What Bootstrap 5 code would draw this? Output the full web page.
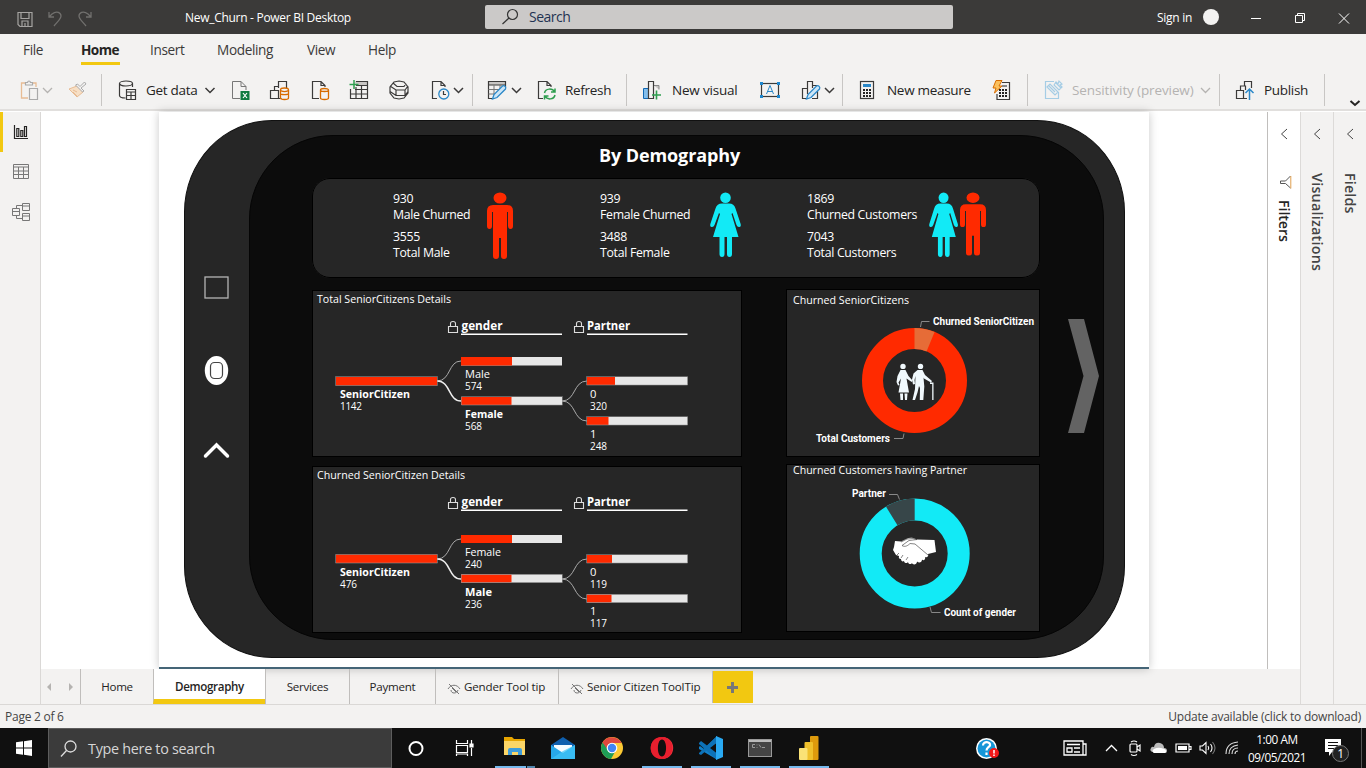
<!DOCTYPE html>
<html lang="en">
<head>
<meta charset="utf-8">
<meta name="viewport" content="width=device-width, initial-scale=1">
<title>New_Churn - Power BI Desktop</title>
<link href="https://cdn.jsdelivr.net/npm/bootstrap@5.3.0/dist/css/bootstrap.min.css" rel="stylesheet">
<style>
body{font-family:"Open Sans","Noto Sans",sans-serif;font-size:13px;line-height:16px;color:#252423;width:1366px;height:768px;overflow:hidden;background:#f3f2f1}
svg{display:block;flex:none;overflow:visible}
.ln{fill:none;stroke:#3b3a39;stroke-width:1.2}
.title-bar{height:34px;background:#3b3a39;color:#fff;padding-left:17px;font-size:12px;letter-spacing:-.29px}
.title-bar .doc-name{margin-left:92px;width:300px;padding-top:2px}
.search-box{width:468px;height:24px;background:#cbc9c8;border-radius:2px;color:#1f3352;font-size:14px;letter-spacing:-.5px;padding-left:17px}
.menu-tabs{height:38px;padding:6px 0 0 23px;font-size:13.6px;letter-spacing:-.35px;line-height:20px;color:#3b3a39}
.menu-tabs span{white-space:nowrap;height:25px}
.menu-tabs .current{font-weight:700;color:#252423;border-bottom:3px solid #f2c811;letter-spacing:-.55px;width:39px}
.ribbon{height:39px;padding-left:20px;grid-template-columns:22px 26px 33px 17px 28px 58px 27px 38px 42px 37px 41px 42px 21px 20px 15px 23px 27px 28px 61px 16px 30px 87px 42px 22px 19px 17px 28px 105px 35px 17px 28px 128px 19px 16px 29px 60px 25px 17px;border-bottom:2px solid #e1dfdd;font-size:13.5px;letter-spacing:-.3px;white-space:nowrap;padding-bottom:1px}
.bar-sep{width:1px;height:32px;background:#c8c6c4}
.workspace{height:593px;border-top:1px solid #fff}
.rail{width:41px;border-right:1px solid #dad8d6}
.rail-btn{height:40px;padding-left:12px}
.rail-btn.on{border-left:3px solid #f2c811;padding-left:9px}
.stage{width:1226px;height:557px;background:#fff;padding-left:118px}
.report-page{width:990px;height:557px;background:#fff;border-bottom:2px solid #456577;box-shadow:0 0 9px rgba(0,0,0,.22);padding:8px 0 0 25px}
.phone{width:941px;height:538px;background:#262626;border-radius:88px/92px;border:1px solid #111;padding:14px 0 0 64px}
.phone-keys{width:64px;margin-left:-65px;margin-right:1px;padding-top:141px}
.screen{width:855px;height:505px;background:#0c0c0c;border:1px solid #050505;border-radius:84px;color:#fff;padding:7px 0 0 62px}
.screen h1{font-size:18px;font-weight:700;letter-spacing:-.1px;line-height:24px;width:730px;padding-left:287px;margin:0 0 11px}
.panel{background:#262626;outline:1px solid #000;outline-offset:-1px}
.summary{width:728px;height:100px;border-radius:18px;padding:13px 0 0 81px;font-size:12.3px;letter-spacing:-.3px}
.summary .fact{width:93px;white-space:nowrap}
.summary .fact div+div{margin-top:6px}
.summary .fact.wide{width:122px}
.boards{grid-template-columns:430px 254px 31px;column-gap:44px;margin-top:12px}
.boards svg text{fill:#fff}
.next{margin-left:-16px;margin-top:29px}
.hd{font-weight:700;font-size:12px}
.nm{font-size:11.2px}.vl{font-size:10px}.ttl{font-size:11.5px}
.dl{font-family:Roboto,sans-serif;font-weight:700;font-size:10px}
.pane{width:33px;border-left:1px solid #dcdad8;padding-top:16px;color:#444}
.pane .upright{writing-mode:vertical-rl;font-weight:600;font-size:14.3px;letter-spacing:-.1px;line-height:18px}
.filters-pane{background:#fff;height:557px;border-color:#c0bebc}
.sheets{width:1259px;height:35px;font-size:11.6px;letter-spacing:-.28px;white-space:nowrap}
.sheets>div{border-left:1px solid #c0bebc;height:35px;padding-top:1px}
.sheets .open-sheet{background:#fff;font-weight:600;border-bottom:5px solid #f2c811;padding-top:5px;letter-spacing:-.35px}
.sheets .add{background:#f2c811;width:41px;height:32px;margin-top:2px;padding:0 1px 0 0}
.status{height:24px;border-top:1px solid #dad8d6;padding:0 5px;font-size:12px;letter-spacing:-.25px;color:#444}
.taskbar{height:40px;background:#101010;color:#fff}
.task-search{width:344px;height:40px;background:#3b3b3b;border:1px solid #5d5d5d;color:#d6d6d6;font-size:14.4px;letter-spacing:-.3px;padding:1px 0 0 11px}
.task{width:49px;height:40px;padding-right:1px}
.app{width:49px;height:40px;padding-top:8px}
.clock{width:60px;font-size:11.8px;line-height:18px;letter-spacing:-.45px;text-align:center}
</style>
</head>
<body>
<header class="title-bar d-flex align-items-center">
  <svg width="76" height="20" fill="none" stroke="#a6a4a2" stroke-width="1.2"><path d="M1 5.500h14v14h-12l-2-2zM4 5.500v6h8v-6M5 19v-5h6v5M8 16v3"/><g stroke="#71706e" stroke-width="1.300"><path d="M32 5v5h5M32 10l3-3c5-4 9-1 9 2 0 3-3 5-7 10"/><path d="M74 5v5h-5M74 10l-3-3c-5-4-9-1-9 2 0 3 3 5 7 10"/></g></svg>
  <span class="doc-name">New_Churn - Power BI Desktop</span>
  <div class="search-box d-flex align-items-center gap-2"><svg width="19" height="16" class="ln" style="stroke:#333"><circle cx="10.500" cy="5.500" r="5"/><path d="M7 9l-6.500 6"/></svg><span>Search</span></div>
  <span style="width:46px;margin-left:204px;padding-top:1px">Sign in</span>
  <svg width="163" height="34"><circle cx="8" cy="17" r="8" fill="#f3f2f1"/><g fill="none" stroke="#fff" stroke-width="1"><path d="M48 18.500h10M92.500 15.500h7v7h-7zM94.500 15v-1.500h7v7h-2M136 13.500l10 10M146 13.500l-10 10"/></g></svg>
</header>
<nav class="menu-tabs d-flex">
  <span style="width:58px">File</span><span class="current">Home</span><span style="width:67px;margin-left:30px">Insert</span><span style="width:90px">Modeling</span><span style="width:61px">View</span><span>Help</span>
</nav>
<section class="ribbon d-grid align-items-center">
  <svg width="20" height="20"><path d="M6 3H1.500v15H8M12 3h4v4" fill="none" stroke="#e8bc94" stroke-width="1.300"/><path d="M5.500 5V2.500h2C8 .5 10 .5 10.500 2.500h2V5zM9.500 8.500h8v11h-8z" fill="none" stroke="#aaa" stroke-width="1.200"/></svg>
  <svg width="11" height="8" fill="none" stroke="#b5b3b1" stroke-width="1.300"><path d="M1 2l4.500 4.500L10 2"/></svg>
  <svg width="20" height="20" fill="none"><path d="M1 9l8-3 6 6-6 5z" fill="#f7dfc5" stroke="#e8bc94"/><path d="M7.500 5l7 7 1.500-1-3-3 5-4-1.500-2L12 6.500 9.500 4z" stroke="#aaa" fill="#f3f2f1"/><path d="M5 10l4 2M5 12l4 4" stroke="#e8bc94"/></svg>
  <div class="bar-sep"></div>
  <svg width="20" height="20" class="ln"><ellipse cx="8" cy="3.500" rx="6.500" ry="2.500"/><path d="M1.500 3.500v12c0 1.500 3 2.500 6 2.500M14.500 3.500V7M8.500 9.500h9v10h-9zM8.500 12h9M8.500 15.500h9M13 12v7"/></svg>
  <span>Get data</span>
  <svg width="11" height="8" class="ln" style="stroke-width:1.5"><path d="M1.500 2L6 6.500 10.500 2"/></svg>
  <svg width="20" height="20"><path d="M9 18.500H1.500v-17H10l5 5V10M10 1.500v5h5" fill="none" stroke="#777"/><rect x="9.500" y="11" width="9" height="9" fill="#107c41"/><path d="M12 13l4 5M16 13l-4 5" stroke="#fff" stroke-width="1.200"/></svg>
  <svg width="21" height="20" fill="none"><path class="ln" d="M1.500 10.500h8v8h-8zM5.500 10V6.500H10M9.500 8V1.500h8V8M9.500 18.500h3"/><path d="M11.500 10v8c0 2 8 2 8 0v-8M11.500 13.500c0 1.500 8 1.500 8 0" stroke="#d86c00" stroke-width="1.300"/><ellipse cx="15.500" cy="9.800" rx="4" ry="1.800" stroke="#d86c00" stroke-width="1.300"/></svg>
  <svg width="20" height="20" fill="none"><path class="ln" d="M8 18.500H1.500v-17H10l4 4V7M10 1.500v4h4"/><path d="M9.500 10v8c0 2 8 2 8 0v-8M9.500 10c0 2 8 2 8 0 0-2-8-2-8 0z" stroke="#d86c00" stroke-width="1.300"/></svg>
  <svg width="21" height="20" fill="none"><path d="M7 1.500h12v4H8" fill="#c8c6c4"/><path class="ln" d="M8 1.500h11.500v17h-17V9M8 5.500h11.500M7 9.500h12.500M2.500 14h17M8 7v11.500M13.500 5.500v13"/><path d="M6 0v9M1.500 4.500h9" stroke="#2f9e4f" stroke-width="1.500"/></svg>
  <svg width="20" height="20" class="ln"><path d="M10 1l5 1 4 5v6l-4 5-5 1-5-1-4-5V7l4-5zM1 6l6 4h9l3-4M1 11.500l6 4h9l3-4M4 3l4 3.500h7l2-3M7 10v6M16 10v6"/></svg>
  <svg width="20" height="20" fill="none"><path class="ln" d="M6 18.500H1.500v-17H10l4 4V7M10 1.500v4h4"/><circle cx="12.800" cy="14" r="5" stroke="#2b88c8" stroke-width="1.300"/><path class="ln" d="M12.500 11v3.500H15"/></svg>
  <svg width="11" height="8" class="ln" style="stroke-width:1.5"><path d="M2 2l4.500 4.500L11 2"/></svg>
  <div class="bar-sep"></div>
  <svg width="20" height="20" fill="none"><path d="M1.500 1.500h17v3.500h-17z" fill="#c8c6c4"/><path class="ln" d="M18.500 7V1.500h-17v17H6M1.500 5h17"/><path stroke="#777" d="M1.500 9.500H13M1.500 14H8M7 5v10M13 5v5"/><path d="M5.500 19l1.500-4.500 8.500-8.500c2-1 4 1 3 3L10 17.500z" fill="#cde6f7" stroke="#2b88c8" stroke-width="1.300"/></svg>
  <svg width="11" height="8" class="ln" style="stroke-width:1.5"><path d="M2 2l4.500 4.500L11 2"/></svg>
  <svg width="20" height="20" fill="none"><path class="ln" d="M6 18.500H1.500v-17H10l4 4V7M10 1.500v4h4"/><path d="M7.500 13c1-5 8-5 10-1M18 8.500V12h-4M18 15c-1 5-8 5-10 1M7.500 19.500V16h4" stroke="#2f9e4f" stroke-width="1.500"/></svg>
  <span>Refresh</span>
  <div class="bar-sep"></div>
  <svg width="20" height="20" fill="none"><path d="M1.500 8.500h5v10h-5z" fill="#83beec" stroke="#1068b5"/><path d="M12 5.500h5v4" stroke="#888" fill="#c8c6c4"/><path class="ln" fill="none" d="M6.500 1.500h5v17h-5z"/><path d="M14.500 10.500v9M10 15h9" stroke="#2f9e4f" stroke-width="1.600"/></svg>
  <span style="letter-spacing:-.2px">New visual</span>
  <svg width="22" height="20"><rect x="2.500" y="3.500" width="17" height="13" class="ln"/><g fill="#1e88d0"><rect x="1" y="2" width="3" height="3"/><rect x="18" y="2" width="3" height="3"/><rect x="1" y="15" width="3" height="3"/><rect x="18" y="15" width="3" height="3"/></g><path d="M7.500 14L11 5.500l3.500 8.500M8.500 11.500h5" fill="none" stroke="#2b88c8"/></svg>
  <svg width="20" height="20" fill="none"><path class="ln" d="M6.500 8.500h-5v10H5M6.500 14V1.500h5V8M12 5.500h4.500M16.500 11v7.500H11"/><path d="M5.500 19l1.500-4.500 8.500-8.500c2-1 4 1 3 3L10 17.500z" fill="#cde6f7" stroke="#2b88c8" stroke-width="1.300"/></svg>
  <svg width="11" height="8" class="ln" style="stroke-width:1.5"><path d="M2 2l4.500 4.500L11 2"/></svg>
  <div class="bar-sep"></div>
  <svg width="20" height="20"><rect x="1.500" y="1.500" width="13" height="17" class="ln"/><rect x="4" y="4" width="8" height="3" fill="#2b88c8"/><path d="M4 10h8M4 13h8M4 16h8" stroke="#252423" stroke-width="2" stroke-dasharray="2 1"/></svg>
  <span>New measure</span>
  <svg width="20" height="20"><path d="M10 2.500h7.500v17H5V14" class="ln"/><path d="M10 6h5" stroke="#888" stroke-width="2"/><path d="M7 10h8M7 13h8M7 16h8" stroke="#252423" stroke-width="2" stroke-dasharray="2 1"/><path d="M4 .500h6L7 6h3l-7.500 7L4 8H1z" fill="#fbc15e" stroke="#d86c00"/></svg>
  <div class="bar-sep"></div>
  <svg width="20" height="20" fill="none" stroke="#a5cde5" stroke-width="1.200"><path d="M10 1.500H1.500v17h13V12"/><path d="M3 7l3-3 8 8-3 3-8-8zM5 6l6 6M12 3l5 5M10 5l2-3 2 2 1-3 3 3-2 1 2 2-3 3z"/></svg>
  <span style="color:#b5b3b1;letter-spacing:-.12px">Sensitivity (preview)</span>
  <svg width="11" height="8" fill="none" stroke="#b5b3b1" stroke-width="1.300"><path d="M1 2l4.500 4.500L10 2"/></svg>
  <div class="bar-sep"></div>
  <svg width="20" height="20" fill="none"><path class="ln" d="M1.500 10.500h7v8h-7zM5.500 10V6h5v4M9.500 6V1.500h7V8M8.500 18.500H12"/><path d="M14.500 20V9M10.500 13l4-4 4 4" stroke="#2b88c8" stroke-width="1.500"/></svg>
  <span>Publish</span>
  <div class="bar-sep"></div>
  <svg width="12" height="8" fill="none" stroke="#252423" stroke-width="2" style="margin-top:26px"><path d="M1.500 2L6 6l4.500-4"/></svg>
</section>

<main class="workspace d-flex">
  <aside class="rail">
    <div class="rail-btn on d-flex align-items-center"><svg width="18" height="16" fill="none" stroke="#252423" stroke-width="1.200"><path d="M2.500 1v13.500H16M4.800 4.500h2v8h-2zM8.800 6.500h2v6h-2zM12.500 2.500h2v10h-2z"/></svg></div>
    <div class="rail-btn d-flex align-items-center"><svg width="18" height="16" fill="none" stroke="#777"><path d="M1.500 .5h15v14h-15zM1.500 3h15M1.500 7h15M1.500 10.500h15M6.500 3v11M11.500 3v11"/></svg></div>
    <div class="rail-btn d-flex align-items-center"><svg width="18" height="19" fill="none" stroke="#777"><path d="M.5 5.500h7v7h-7zM.5 8.500h7M10.500 .5h7v7h-7zM10.500 3h7M10.500 10.500h7v7h-7zM10.500 13h7M4.500 5.500v-3h6M4.500 12.500v3h6"/></svg></div>
  </aside>
  <div class="d-flex flex-column">
   <div class="d-flex">
    <div class="stage">
      <article class="report-page">
        <div class="phone d-flex">
          <div class="phone-keys"><svg width="64" height="190" fill="none"><rect x="21" y="1" width="23" height="21" stroke="#b4b4b4" stroke-width="1.300"/><ellipse cx="32.500" cy="94.500" rx="11.700" ry="14.500" fill="#fff"/><rect x="26.500" y="86.500" width="12" height="16" rx="4" stroke="#444" stroke-width="1.200"/><path d="M21.500 180l11-11 11 11" stroke="#fff" stroke-width="3.500" stroke-linecap="round"/></svg></div>
          <div class="screen">
            <h1>By Demography</h1>
            <div class="panel summary d-flex">
              <div class="fact"><div>930<br>Male Churned</div><div>3555<br>Total Male</div></div>
              <svg width="114" height="70" fill="#ff2a00"><g id="male"><ellipse cx="14" cy="7" rx="6.500" ry="5.500"/><path d="M7 14h14q6 0 6 6v15q0 3-2.500 3t-2.500-3V21h-1v44q0 3-3 3t-3-3V47h-2v18q0 3-3 3t-3-3V21H6v14q0 3-2.500 3T1 35V20q0-6 6-6z"/></g></svg>
              <div class="fact" style="width:110px"><div>939<br>Female Churned</div><div>3488<br>Total Female</div></div>
              <svg width="97" height="70" fill="#12eaf6"><g id="female"><circle cx="15.500" cy="6.800" r="5.300"/><path d="M12 12.500h7q5 0 6.500 5l5 15q1 3-1 3.500t-3-2L22.500 22l-1 1 7 23h-6.500v17q0 3-2.500 3T17 63V46h-2.500v17q0 3-2.500 3t-2.500-3V46H3l7-23-1-1-4.500 12q-1 2.500-3 2T.5 32.500l5-15q1.500-5 6.500-5z"/></g></svg>
              <div class="fact wide"><div>1869<br>Churned Customers</div><div>7043<br>Total Customers</div></div>
              <svg width="60" height="70"><use href="#female" transform="scale(.94 1)" fill="#12eaf6"/><use href="#male" fill="#ff2a00" transform="translate(30 0) scale(1 .95)"/></svg>
            </div>
            <div class="boards d-grid">
              <div class="d-flex flex-column" style="gap:9px">
                <div class="panel"><svg width="430" height="167" viewBox="312 290 430 167">
                  <text class="ttl" x="317" y="303" textLength="134" lengthAdjust="spacingAndGlyphs">Total SeniorCitizens Details</text>
                  <g fill="none" stroke="#ddd" stroke-width="1.100"><path d="M448.500 326.500h9v6h-9zM450.500 326v-2.500q0-2 2.500-2t2.500 2v2.500M574.500 326.500h9v6h-9zM576.500 326v-2.500q0-2 2.500-2t2.500 2v2.500"/></g>
                  <text class="hd" x="461.500" y="330" textLength="41" lengthAdjust="spacingAndGlyphs">gender</text><text class="hd" x="587" y="330" textLength="43" lengthAdjust="spacingAndGlyphs">Partner</text>
                  <path d="M461 334.200h101M587 334.200h100.500" stroke="#fff" stroke-width="1.500"/>
                  <g fill="none" stroke="#aaa"><path d="M437 381c14 0 11-20 24-20M562 401c14 0 11-20 25-20M562 401c14 0 11 20 25 20"/><path d="M437 381c14 0 11 20 24 20" stroke="#eee" stroke-width="1.500"/></g>
                  <path d="M461 357h101v8.500H461zM461 397h101v8H461zM587 377h100.500v8H587zM587 417h100.500v8H587z" fill="#e6e6e6"/>
                  <path d="M336 377h101v8.500H336zM461 357h51v8.500h-51zM461 397h50.500v8H461zM587 377h28v8h-28zM587 417h21.500v8H587z" fill="#ff2a00"/>
                  <path d="M335.500 376.500h102v9h-102zM461.500 396.500h101v8.500h-101zM586.500 376.500h101v8.500h-101zM586.500 416.500h101v8.500h-101z" fill="none" stroke="#999" stroke-opacity=".55"/>
                  <g class="nm"><text x="465" y="378" textLength="25" lengthAdjust="spacingAndGlyphs">Male</text><text x="590" y="398">0</text><text x="590" y="437.500">1</text><g font-weight="700"><text x="340" y="398" textLength="70" lengthAdjust="spacingAndGlyphs">SeniorCitizen</text><text x="465" y="418" textLength="38" lengthAdjust="spacingAndGlyphs">Female</text></g></g>
                  <g class="vl"><text x="465" y="390" textLength="17">574</text><text x="340" y="410" textLength="22">1142</text><text x="465" y="429.500" textLength="17">568</text><text x="590" y="410" textLength="17">320</text><text x="590" y="449.500" textLength="17">248</text></g>
                </svg></div>
                <div class="panel"><svg width="430" height="167" viewBox="312 466 430 167">
                  <text class="ttl" x="317" y="479" textLength="148" lengthAdjust="spacingAndGlyphs">Churned SeniorCitizen Details</text>
                  <g fill="none" stroke="#ddd" stroke-width="1.100"><path d="M448.500 502.500h9v6h-9zM450.500 502v-2.500q0-2 2.500-2t2.500 2v2.500M574.500 502.500h9v6h-9zM576.500 502v-2.500q0-2 2.500-2t2.500 2v2.500"/></g>
                  <text class="hd" x="461.500" y="506" textLength="41" lengthAdjust="spacingAndGlyphs">gender</text><text class="hd" x="587" y="506" textLength="43" lengthAdjust="spacingAndGlyphs">Partner</text>
                  <path d="M461 510.200h101M587 510.200h100.500" stroke="#fff" stroke-width="1.500"/>
                  <g fill="none" stroke="#aaa"><path d="M437 559c14 0 11-20 24-20M562 579c14 0 11-20 25-20M562 579c14 0 11 20 25 20"/><path d="M437 559c14 0 11 20 24 20" stroke="#eee" stroke-width="1.500"/></g>
                  <path d="M461 535h101v8H461zM461 574.500h101v8H461zM587 555h100.500v8H587zM587 594.500h100.500v8H587z" fill="#e6e6e6"/>
                  <path d="M336 554.500h101v8.500H336zM461 535h51v8h-51zM461 574.500h50.500v8H461zM587 555h25v8h-25zM587 594.500h24.500v8H587z" fill="#ff2a00"/>
                  <path d="M335.500 554.500h102v8.500h-102zM461.500 574.500h101v8h-101zM586.500 554.500h101v8.500h-101zM586.500 594.500h101v8h-101z" fill="none" stroke="#999" stroke-opacity=".55"/>
                  <g class="nm"><text x="465" y="556" textLength="36" lengthAdjust="spacingAndGlyphs">Female</text><text x="590" y="576">0</text><text x="590" y="615">1</text><g font-weight="700"><text x="340" y="576" textLength="70" lengthAdjust="spacingAndGlyphs">SeniorCitizen</text><text x="465" y="596" textLength="27" lengthAdjust="spacingAndGlyphs">Male</text></g></g>
                  <g class="vl"><text x="465" y="568" textLength="17">240</text><text x="340" y="588" textLength="17">476</text><text x="465" y="607.500" textLength="17">236</text><text x="590" y="588" textLength="17">119</text><text x="590" y="627" textLength="17">117</text></g>
                </svg></div>
              </div>
              <div class="d-flex flex-column" style="gap:7px;margin-top:-1px">
                <div class="panel"><svg width="254" height="168" viewBox="786 289 254 168">
                  <text class="ttl" x="793" y="304" textLength="116" lengthAdjust="spacingAndGlyphs">Churned SeniorCitizens</text>
                  <g fill="none" stroke-width="21" transform="rotate(-90 914.500 380.500)"><circle cx="914.500" cy="380.500" r="42" stroke="#ff2a00"/><circle cx="914.500" cy="380.500" r="42" stroke="#e66c37" pathLength="360" stroke-dasharray="22.500 337.500"/></g>
                  <path d="M920.500 327l1-5.500h8M894 438.500h9l1-5" fill="none" stroke="#888"/>
                  <text class="dl" x="933" y="325" textLength="101" lengthAdjust="spacingAndGlyphs">Churned SeniorCitizen</text><text class="dl" x="816" y="442" textLength="74" lengthAdjust="spacingAndGlyphs">Total Customers</text>
                  <g fill="#f1f9fd"><circle cx="903" cy="366.400" r="2.700"/><path d="M900.500 370h5l3 6 4 4.500-.8 1.500-5.200-3.500 2.500 14h-10.500l2.500-14-2.500 4 1 2.500-1.500.5-1.500-3.500 1-6zM900 393.500h3v6.500h-2.500zM904.500 393.500h3l-.5 6.500H905z"/><circle cx="920.500" cy="366.400" r="2.700"/><path d="M917.500 370h5l2.500 5 7 6-1 1.500-7-4-.5-1 .8 9-1 13.500h-3.500l.2-12-1-2-1.500 6.500-2.500 7.500h-2.500l2.500-11 .5-13-1 4 .5 4-2 .5-1-5 1.500-6zM930 382.500h3.500v17.500h-1.300v-16H930z"/></g>
                </svg></div>
                <div class="panel"><svg width="254" height="168" viewBox="786 464 254 168">
                  <text class="ttl" x="793" y="474" textLength="174" lengthAdjust="spacingAndGlyphs">Churned Customers having Partner</text>
                  <g fill="none" stroke-width="22"><circle cx="914.700" cy="553.500" r="44" stroke="#12eaf6"/><circle cx="914.700" cy="553.500" r="44" stroke="#374649" pathLength="360" stroke-dasharray="31.500 328.500" transform="rotate(-121.500 914.700 553.500)"/></g>
                  <path d="M889 494.500h8.500l2 5M930 607l1.500 5.500h9" fill="none" stroke="#888"/>
                  <text class="dl" x="852" y="497" textLength="34" lengthAdjust="spacingAndGlyphs">Partner</text><text class="dl" x="944" y="616" textLength="72" lengthAdjust="spacingAndGlyphs">Count of gender</text>
                  <path d="M895 541l6 .5c4-2 8-4.500 12-3.500l4 1.500 17.500.5 1.500 12-8 2c1 2-1 4-3 3 1 3-2 4-3 2.500 0 3-3 4-5 2 0 3-4 4-5 1.500-1 2-4 1-4-1-1 2-4 1-4-1-1.500 1-3 0-3-2-2 0-2.500-1-2-3l-3-1-3-5 1-3z" fill="#fff"/><path d="M901 542l6-3 6-.5 4 1M917 539.500l-8 1-7 5c3 2 6 0 8-2l5 .5 13 11M897 555l2-2M901 558l2-3M906 560l2-3" fill="none" stroke="#333" stroke-width=".6"/>
                </svg></div>
              </div>
              <svg class="next" width="31" height="114"><path d="M0 0h16l15 57-15 57H0l15.500-57z" fill="#636363"/></svg>
            </div>
          </div>
        </div>
      </article>
    </div>
    <aside class="pane filters-pane d-flex flex-column align-items-center"><svg width="8" height="12" fill="none" stroke="#444"><path d="M7 1L1.500 6 7 11"/></svg><svg style="margin-top:36px;margin-left:4px" width="12" height="12" fill="none" stroke="#555"><path d="M10.500 0L5.500 5H.5v2.500h5l5 4.500"/><path d="M10.800 0v12.500" stroke="#e0a050"/></svg><span class="upright" style="margin-top:12px;color:#252423">Filters</span></aside>
   </div>
   <div class="sheets d-flex">
     <div class="border-0 d-flex align-items-center" style="width:39px;padding-left:5px"><svg width="30" height="10" fill="#b5b3b1"><path d="M5 1v8L1 5zM23 1v8l4-4z"/></svg></div>
     <div class="d-flex align-items-center justify-content-center" style="width:73px">Home</div>
     <div class="open-sheet d-flex align-items-center justify-content-center" style="width:112px">Demography</div>
     <div class="d-flex align-items-center justify-content-center" style="width:84px">Services</div>
     <div class="d-flex align-items-center justify-content-center" style="width:86px">Payment</div>
     <div class="d-flex align-items-center gap-1" style="width:123px;padding-left:12px;letter-spacing:-.18px"><svg width="12" height="10" fill="none" stroke="#777" class="mt-1"><path d="M0 5c3-5 9-5 12 0M3 6c0 4 6 4 7 0M1 0l10 10M4 4l4 4"/></svg>Gender Tool tip</div>
     <div class="d-flex align-items-center gap-1" style="width:154px;padding-left:12px;letter-spacing:-.15px"><svg width="12" height="10" fill="none" stroke="#777" class="mt-1"><path d="M0 5c3-5 9-5 12 0M3 6c0 4 6 4 7 0M1 0l10 10M4 4l4 4"/></svg>Senior Citizen ToolTip</div>
     <div class="add d-flex align-items-center justify-content-center"><svg width="11" height="11"><path d="M5.500 0v11M0 5.500h11" stroke="#777" stroke-width="3"/></svg></div>
   </div>
  </div>
  <aside class="pane d-flex flex-column align-items-center"><svg width="8" height="12" fill="none" stroke="#444"><path d="M7 1L1.500 6 7 11"/></svg><span class="upright" style="margin-top:33px;letter-spacing:.25px">Visualizations</span></aside>
  <aside class="pane d-flex flex-column align-items-center"><svg width="8" height="12" fill="none" stroke="#444"><path d="M7 1L1.500 6 7 11"/></svg><span class="upright" style="margin-top:33px;letter-spacing:.15px">Fields</span></aside>
</main>
<div class="status d-flex justify-content-between align-items-center"><span>Page 2 of 6</span><span style="letter-spacing:-.22px">Update available (click to download)</span></div>
<footer class="taskbar d-flex align-items-center">
  <div class="d-flex justify-content-center" style="width:48px"><svg width="16" height="16" fill="#fff"><path d="M0 2.300L7 1.300v6.200H0zM8 1.200L16 0v7.500H8zM0 8.500h7v6.200l-7-1zM8 8.500h8V16l-8-1.200z"/></svg></div>
  <div class="task-search d-flex align-items-center"><svg width="28" height="18" fill="none" stroke="#ddd" stroke-width="1.300"><circle cx="10.500" cy="6.500" r="5.500"/><path d="M6.500 10.500L1 16.500"/></svg>Type here to search</div>
  <div class="task d-flex align-items-center justify-content-center"><svg width="16" height="16"><circle cx="8" cy="8.500" r="6.500" fill="none" stroke="#fff" stroke-width="2"/></svg></div>
  <div class="task d-flex align-items-center justify-content-center"><svg width="18" height="18" fill="none" stroke="#fff" stroke-width="1.200"><path d="M.5 1v3.500h11V1M.5 6.500h11v7H.5zM.5 17v-2h11v2M15.500 1v4M15.500 9v8"/><path d="M14 5h3v3h-3z" fill="#fff"/></svg></div>
  <div class="app d-flex flex-column justify-content-between align-items-center"><svg width="22" height="22"><path d="M0 1h8l2 2h11v16H0z" fill="#e7a500"/><path d="M0 5h21v14H0z" fill="#fcd667"/><path d="M4 19v-5q0-2 2-2h10q2 0 2 2v5h-4v-3H8v3z" fill="#3f9ddb"/></svg><svg width="40" height="2"><path d="M0 0h31v2H0z" fill="#76b9ed"/><path d="M32 0h8v2h-8z" fill="#5186ad"/></svg></div>
  <div class="task d-flex align-items-center justify-content-center"><svg width="24" height="24"><path d="M0 9L12 1l12 8v5H0z" fill="#0f5fae"/><path d="M3 9h18v9H3z" fill="#f5fbff"/><path d="M0 9l12 8 12-8v14H0z" fill="#27a8ea"/><path d="M0 23l12-8 12-6v14z" fill="#42c4f7" opacity=".7"/></svg></div>
  <div class="task d-flex align-items-center justify-content-center"><svg width="24" height="24"><circle cx="12" cy="12" r="11" fill="#fcc934"/><path d="M12 12L2.500 6.500A11 11 0 0 0 11 23l5-9z" fill="#1e9d56"/><path d="M2.500 6.500A11 11 0 0 1 21.600 7H12l-4 7z" fill="#e0483e"/><circle cx="12" cy="12" r="5.300" fill="#fff"/><circle cx="12" cy="12" r="4.200" fill="#4285f4"/></svg></div>
  <div class="app d-flex flex-column justify-content-between align-items-center"><svg width="24" height="24"><path d="M12 1c-15 0-15 22 0 22-6-2-6-20 0-22" fill="#e01525"/><path d="M12 1c15 0 15 22 0 22 6-2 6-20 0-22" fill="#f5363f"/><path d="M12 1C-3 1-3 23 12 23 26 23 26 1 12 1zm0 2.500c5.500 0 5.500 17 0 17s-5.500-17 0-17z" fill="#e81f2e" fill-rule="evenodd"/></svg><svg width="40" height="2"><path d="M0 0h40v2H0z" fill="#76b9ed"/></svg></div>
  <div class="app d-flex flex-column justify-content-between align-items-center"><svg width="24" height="24"><path d="M18 0L5 13l-4-3-1 1v2l17 10z" fill="#1180c9"/><path d="M0 17l18-17v6L2 19l-2-1zM2 5l16 12v7L0 8V7z" fill="#0d72b8"/><path d="M17.500 7v10L11 12z" fill="#101010"/><path d="M17 0l7 3v18l-7 3z" fill="#29a9f2"/></svg><svg width="40" height="2"><path d="M0 0h40v2H0z" fill="#76b9ed"/></svg></div>
  <div class="app d-flex flex-column justify-content-between align-items-center" style="padding-top:11px"><svg width="24" height="18"><rect x=".5" y=".5" width="23" height="17" fill="#454545" stroke="#999"/><path d="M1 2h22" stroke="#bbb" stroke-width="2"/><path d="M7 5.500H4.500v3H7M9 5.500v.8M9 8v.8M11 5.500l2 3M14 8.500h3" stroke="#999" fill="none"/></svg><svg width="40" height="2"><path d="M0 0h40v2H0z" fill="#76b9ed"/></svg></div>
  <div class="app d-flex flex-column justify-content-between align-items-center"><svg width="20" height="24"><rect x="11" width="8.500" height="24" rx="1" fill="#dd9a0c"/><rect x="5.500" y="6" width="8.500" height="18" rx="1" fill="#efc02b"/><rect x="0" y="12" width="8.500" height="12" rx="1" fill="#fae276"/></svg><svg width="40" height="2"><path d="M0 0h40v2H0z" fill="#76b9ed"/></svg></div>
  <svg width="24" height="24" style="margin-left:142px"><circle cx="11.500" cy="12.500" r="10.500" fill="#fff"/><circle cx="11.500" cy="12.500" r="9" fill="#1596d8"/><path d="M8 9.500c0-5 8-4 7 0-1 2-3.500 2-3.500 5M11.500 16.500v2.500" fill="none" stroke="#fff" stroke-width="2.200"/><circle cx="19" cy="17" r="5" fill="#f01818"/><path d="M19 14v3.500M19 18.500V20" stroke="#fff" stroke-width="1.500"/></svg>
  <svg width="25" height="17" fill="none" stroke="#fff" stroke-width="1.300" style="margin-left:64px"><path d="M1 1h19v14H1zM20 4h3v11H20M4 4.500h13M4 8h5v4H4zM11 8h6M11 12h6"/></svg>
  <svg width="13" height="8" fill="none" stroke="#fff" stroke-width="1.300" style="margin-left:17px"><path d="M1 7l5.500-5.500L12 7"/></svg>
  <svg width="14" height="18" fill="none" stroke="#fff" stroke-width="1.200" style="margin-left:11px"><rect x="1" y="5" width="7" height="8" rx="1"/><path d="M8 8l3-2v6l-3-2M2 3q3-2 6 0M2 15.500q3 2 6 0"/></svg>
  <svg width="17" height="12" style="margin-left:7px"><path d="M3 10q-4-1-2-4 1-2 3-1 1-5 6-4 4 1 4 5 3 0 3 3 0 2-2 2H4z" fill="#bbb"/><path d="M4 11q-3-2 0-4 4-2 7-1 6 1 5 4l-1 1z" fill="#fff"/></svg>
  <svg width="17" height="10" style="margin-left:8px"><path d="M1 1h13v8H1zM14 3.500h2v3h-2" fill="none" stroke="#fff" stroke-width="1.200"/><path d="M3 3h9v4H3z" fill="#fff"/></svg>
  <svg width="18" height="14" fill="none" stroke="#fff" stroke-width="1.100" style="margin-left:7px"><path d="M1 5h2.500L7 1.500v11L3.500 9H1zM9 5q1.500 2 0 4M11.500 3q3 4 0 8"/><path d="M13.500 1q5 6 0 12" stroke="#777"/></svg>
  <svg width="15" height="14" fill="none" stroke="#ddd" stroke-width="1.100" style="margin-left:8px"><path d="M1 13Q1 2 13 1M4 13Q4 5 13 4M7 13q0-6 6-6M10 13q0-3 3-3"/></svg>
  <div class="clock" style="margin-left:7px">1:00 AM<br>09/05/2021</div>
  <svg width="26" height="26" style="margin-left:18px"><path d="M0 4h16v13H7l-3 4v-4H0z" fill="#fff"/><path d="M3 7.500h10M3 10.500h10M3 13.500h7" stroke="#101010"/><circle cx="15.500" cy="18.500" r="8" fill="#222" stroke="#777"/><text x="12.300" y="23" fill="#fff" font-size="12">1</text></svg>
  <div style="width:1px;height:40px;background:#555;margin-left:10px"></div>
</footer>
<script src="https://cdn.jsdelivr.net/npm/bootstrap@5.3.0/dist/js/bootstrap.bundle.min.js"></script>
</body>
</html>
